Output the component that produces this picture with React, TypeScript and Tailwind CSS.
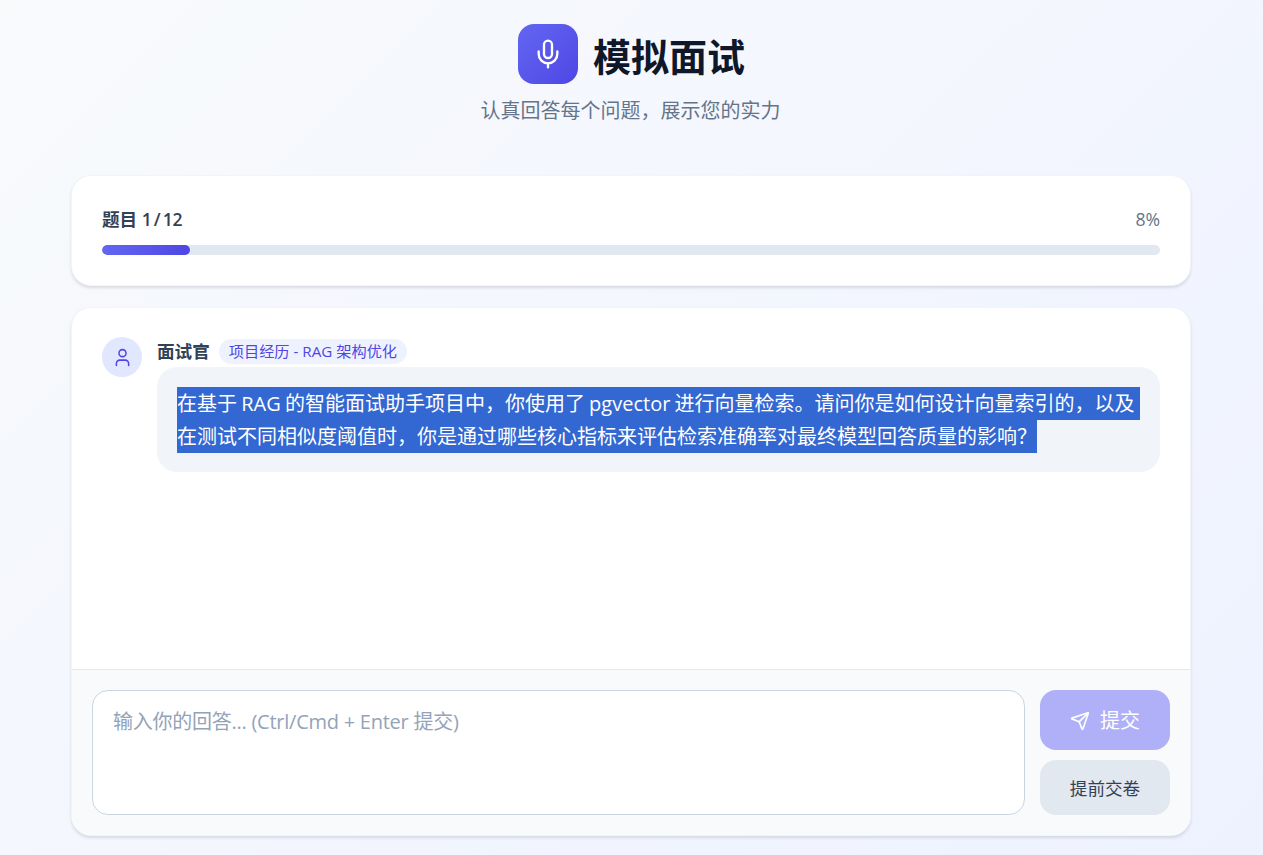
import { useEffect, useRef } from "react";
import { Mic, User, Send } from "lucide-react";

export default function App() {
  const q = useRef<HTMLSpanElement>(null);
  useEffect(() => {
    const s = window.getSelection();
    if (s && q.current) s.selectAllChildren(q.current);
  }, []);
  return (
    <div className="h-screen overflow-hidden flex flex-col items-center pt-6 pb-[19px] bg-[linear-gradient(135deg,#f8fafc_0%,#eef2ff_100%)] font-['Open_Sans','Noto_Sans_CJK_SC',sans-serif] text-[#1e293b]">
      <header className="flex flex-col items-center">
        <div className="flex items-center gap-[15px]">
          <div className="w-[60px] h-[60px] rounded-2xl bg-gradient-to-br from-[#6366f1] to-[#4f46e5] flex items-center justify-center text-white">
            <Mic size={32} strokeWidth={1.75} />
          </div>
          <h1 className="text-[38px] leading-[52px] mt-[4px] font-bold text-[#0f172a]">模拟面试</h1>
        </div>
        <p className="mt-[12px] pr-[2px] text-[20px] leading-[30px] text-[#64748b]">认真回答每个问题，展示您的实力</p>
      </header>

      <section className="mt-[49px] self-start ml-[71px] w-[1120px] h-[111px] shrink-0 rounded-[20px] border border-[#f1f5f9] bg-white px-[30px] pt-[29px] shadow-[0_2px_3px_rgba(15,23,42,0.12)]">
        <div className="flex justify-between items-center h-[28px] text-[17.6px]">
          <span className="font-semibold text-[#334155]">题目 <span className="[word-spacing:-2px] tracking-[-0.3px]">1 / 12</span></span>
          <span className="text-[#64748b]">8%</span>
        </div>
        <div className="mt-[12px] h-[10px] rounded-full bg-[#e2e8f0] overflow-hidden">
          <div className="h-full rounded-full bg-gradient-to-r from-[#6366f1] to-[#4f46e5]" style={{ width: `${100 / 12}%` }} />
        </div>
      </section>

      <section className="mt-[21px] self-start ml-[71px] w-[1120px] flex-1 min-h-0 rounded-[20px] border border-[#f1f5f9] bg-white shadow-[0_2px_3px_rgba(15,23,42,0.12)] flex flex-col overflow-hidden">
        <div className="flex-1 min-h-0 px-[30px] pt-[29px] flex gap-[15px]">
          <div className="w-10 h-10 shrink-0 rounded-full bg-[#e0e7ff] flex items-center justify-center text-[#4f46e5]">
            <User size={21} strokeWidth={1.75} />
          </div>
          <div className="flex-1 min-w-0">
            <div className="flex items-center gap-[9px] h-[30px] -mt-[1px] mb-[1px]">
              <span className="text-[17.6px] font-semibold text-[#334155]">面试官</span>
              <span className="px-[10px] h-[25px] leading-[25px] rounded-full bg-[#eef2ff] text-[15.2px] text-[#4f46e5]">项目经历 - RAG 架构优化</span>
            </div>
            <div className="rounded-[20px] bg-[#f1f5f9] px-[20px] pt-[20px] pb-[19px] text-[20px] leading-[33px] [word-spacing:-1px] text-[#1e293b] selection:bg-[#3367d1] selection:text-white">
              <span ref={q} className="selection:bg-[#3367d1] selection:text-white">在基于 RAG 的智能面试助手项目中，你使用了 pgvector 进行向量检索。请问你是如何设计向量索引的，以及在测试不同相似度阈值时，你是通过哪些核心指标来评估检索准确率对最终模型回答质量的影响？</span>
            </div>
          </div>
        </div>
        <div className="border-t border-[#e2e8f0] bg-[#f8fafc] p-[20px] flex gap-[15px]">
          <textarea
            readOnly
            placeholder="输入你的回答... (Ctrl/Cmd + Enter 提交)"
            className="flex-1 h-[125px] resize-none rounded-2xl border border-[#cbd5e1] bg-white px-[20px] py-[15px] text-[20px] leading-[32px] tracking-[-0.25px] outline-none placeholder:text-[#94a3b8]"
          />
          <div className="w-[130px] flex flex-col gap-[10px]">
            <button className="h-[60px] pt-[2px] rounded-2xl bg-[#afb0f7] text-white text-[20px] flex items-center justify-center gap-[10px]">
              <Send size={20} strokeWidth={2} />
              提交
            </button>
            <button className="h-[55px] pt-[2px] rounded-2xl bg-[#e2e8f0] text-[#334155] text-[17.6px]">提前交卷</button>
          </div>
        </div>
      </section>
    </div>
  );
}
